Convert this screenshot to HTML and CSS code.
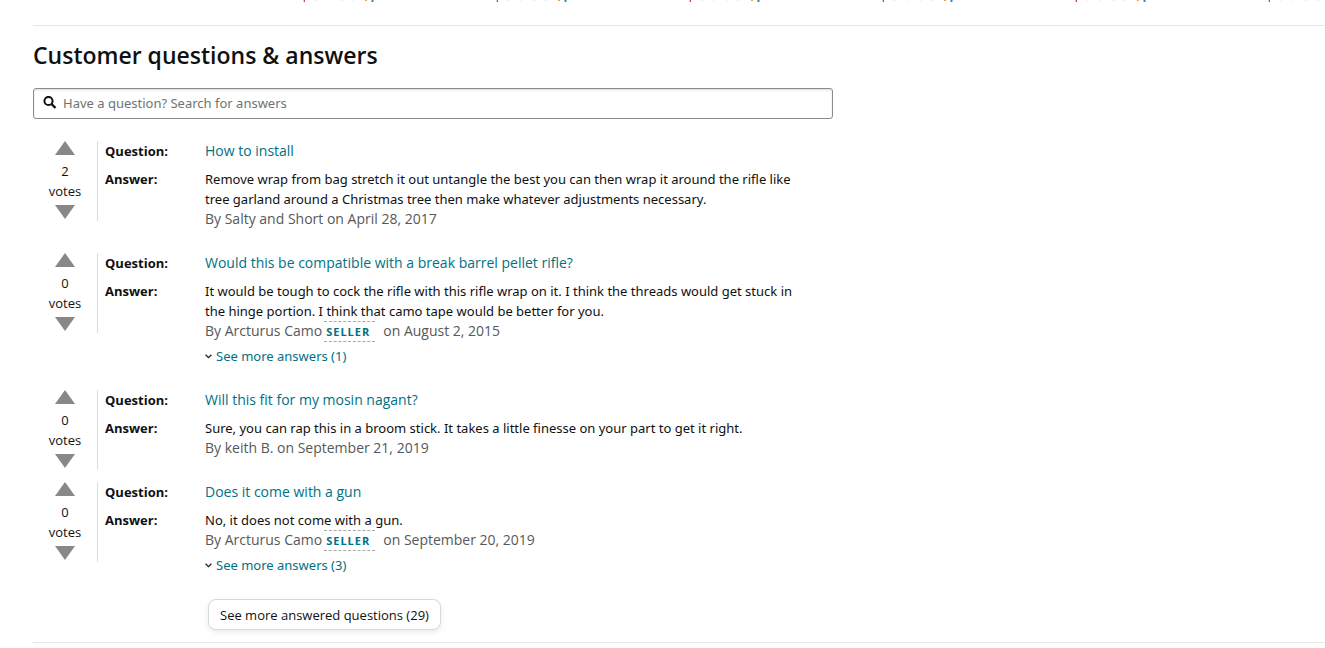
FILE: index.html
```
<!DOCTYPE html>
<html lang="en">
<head>
<meta charset="utf-8">
<meta name="viewport" content="width=device-width, initial-scale=1">
<title>Customer questions &amp; answers</title>
<link rel="stylesheet" href="styles.css">
</head>
<body>
<svg width="0" height="0" class="defs" aria-hidden="true">
  <symbol id="card-edge" viewBox="0 0 80 3">
    <path fill="#b5476b" d="M1 0h1v2h-1z"/>
    <path fill="#f3cdb5" d="M0 0h1v2H0z"/>
    <path fill="#f0f0f0" d="M11 0h3v1h-3zM24 0h2v1h-2zM37 0h3v1h-3zM48 0h3v1h-3z"/>
    <path fill="#e5a45c" d="M62 0h2v1h-2z"/>
    <path fill="#2f86ab" d="M69 0h1v2h-1z"/>
    <path fill="#8fd0e6" d="M68 0h1v2h-1zM70 0h1v2h-1z"/>
  </symbol>
</svg>
<main class="page">
  <div class="carousel-edge" aria-hidden="true">
    <svg class="edge"><use href="#card-edge"/></svg>
    <svg class="edge"><use href="#card-edge"/></svg>
    <svg class="edge"><use href="#card-edge"/></svg>
    <svg class="edge"><use href="#card-edge"/></svg>
    <svg class="edge"><use href="#card-edge"/></svg>
    <svg class="edge"><use href="#card-edge"/></svg>
  </div>
  <section class="qa">
    <h2 class="title">Customer questions &amp; answers</h2>
    <label class="search">
      <svg class="search-icon" viewBox="0 0 14 14" aria-hidden="true"><circle cx="5.5" cy="5" r="4.1" fill="none" stroke="#111" stroke-width="2"/><path d="M8.5 8l4 4" stroke="#111" stroke-width="2.4"/></svg>
      <input class="search-input" type="text" placeholder="Have a question? Search for answers" aria-label="Have a question? Search for answers">
    </label>
    <div class="list">
      <article class="item">
        <div class="votes">
          <button class="vote" aria-label="Vote up"><svg class="tri" viewBox="0 0 20 14"><path d="M10 0l10 14H0z"/></svg></button>
          <span class="count">2</span><span class="count">votes</span>
          <button class="vote vote-down" aria-label="Vote down"><svg class="tri" viewBox="0 0 20 14"><path d="M0 0h20L10 14z"/></svg></button>
        </div>
        <div class="body">
          <b class="label">Question:</b><div><a class="link" href="#">How to install</a></div>
          <b class="label">Answer:</b>
          <div>
            <p class="text">Remove wrap from bag stretch it out untangle the best you can then wrap it around the rifle like<br>tree garland around a Christmas tree then make whatever adjustments necessary.</p>
            <p class="byline">By Salty and Short on April 28, 2017</p>
          </div>
        </div>
      </article>
      <article class="item">
        <div class="votes">
          <button class="vote" aria-label="Vote up"><svg class="tri" viewBox="0 0 20 14"><path d="M10 0l10 14H0z"/></svg></button>
          <span class="count">0</span><span class="count">votes</span>
          <button class="vote vote-down" aria-label="Vote down"><svg class="tri" viewBox="0 0 20 14"><path d="M0 0h20L10 14z"/></svg></button>
        </div>
        <div class="body">
          <b class="label">Question:</b><div><a class="link" href="#">Would this be compatible with a break barrel pellet rifle?</a></div>
          <b class="label">Answer:</b>
          <div>
            <p class="text">It would be tough to cock the rifle with this rifle wrap on it. I think the threads would get stuck in<br>the hinge portion. I think that camo tape would be better for you.</p>
            <p class="byline"><span>By Arcturus Camo</span><a class="badge" href="#">SELLER</a><span>on August 2, 2015</span></p>
            <a class="link more" href="#"><svg class="chev" viewBox="0 0 7 5"><path d="M.6.8l2.9 2.9L6.4.8"/></svg>See more answers (1)</a>
          </div>
        </div>
      </article>
      <article class="item">
        <div class="votes">
          <button class="vote" aria-label="Vote up"><svg class="tri" viewBox="0 0 20 14"><path d="M10 0l10 14H0z"/></svg></button>
          <span class="count">0</span><span class="count">votes</span>
          <button class="vote vote-down" aria-label="Vote down"><svg class="tri" viewBox="0 0 20 14"><path d="M0 0h20L10 14z"/></svg></button>
        </div>
        <div class="body">
          <b class="label">Question:</b><div><a class="link" href="#">Will this fit for my mosin nagant?</a></div>
          <b class="label">Answer:</b>
          <div>
            <p class="text">Sure, you can rap this in a broom stick. It takes a little finesse on your part to get it right.</p>
            <p class="byline">By keith B. on September 21, 2019</p>
          </div>
        </div>
      </article>
      <article class="item">
        <div class="votes">
          <button class="vote" aria-label="Vote up"><svg class="tri" viewBox="0 0 20 14"><path d="M10 0l10 14H0z"/></svg></button>
          <span class="count">0</span><span class="count">votes</span>
          <button class="vote vote-down" aria-label="Vote down"><svg class="tri" viewBox="0 0 20 14"><path d="M0 0h20L10 14z"/></svg></button>
        </div>
        <div class="body">
          <b class="label">Question:</b><div><a class="link" href="#">Does it come with a gun</a></div>
          <b class="label">Answer:</b>
          <div>
            <p class="text">No, it does not come with a gun.</p>
            <p class="byline"><span>By Arcturus Camo</span><a class="badge" href="#">SELLER</a><span>on September 20, 2019</span></p>
            <a class="link more" href="#"><svg class="chev" viewBox="0 0 7 5"><path d="M.6.8l2.9 2.9L6.4.8"/></svg>See more answers (3)</a>
          </div>
        </div>
      </article>
    </div>
    <button class="see-all">See more answered questions (29)</button>
  </section>
</main>
</body>
</html>
```
FILE: styles.css
```
* { box-sizing: border-box; }
body {
  margin: 0;
  background: #fff;
  color: #0f1111;
  font: 14px/20px "Open Sans", "Noto Sans", sans-serif;
}
.defs { position: absolute; }
.page { padding-left: 33px; }
.carousel-edge {
  display: flex;
  gap: 113px;
  height: 25px;
  padding-left: 270px;
  overflow: hidden;
}
.edge { flex: none; width: 80px; height: 3px; }
.qa {
  border-top: 1px solid #e7e7e7;
  border-bottom: 1px solid #e7e7e7;
  padding: 13px 0 12px;
}
.title { margin: 0 0 17px; font-size: 23px; line-height: 32px; font-weight: 600; }
.search {
  display: flex;
  align-items: center;
  gap: 6px;
  max-width: 800px;
  height: 31px;
  padding: 0 9px 1px;
  border: 1px solid #888c8c;
  border-radius: 3px;
  box-shadow: 0 1px 2px rgba(15, 17, 17, .15) inset;
}
.search-icon { flex: none; width: 14px; height: 14px; }
.search-input {
  flex: 1;
  min-width: 0;
  padding: 0;
  border: 0;
  outline: 0;
  background: none;
  color: inherit;
  font: 13px/20px "Noto Sans", sans-serif;
}
.search-input::placeholder { color: #6f7373; opacity: 1; }
.list { display: grid; gap: 12px; margin-top: 22px; max-width: 800px; }
.item { display: flex; align-items: flex-start; }
.votes {
  display: flex;
  flex-direction: column;
  align-items: center;
  flex: none;
  width: 65px;
  height: 80px;
  border-right: 1px solid #ddd;
  font-size: 13px;
}
.vote {
  display: flex;
  height: 20px;
  padding: 0;
  border: 0;
  background: none;
  cursor: pointer;
}
.vote-down { padding-top: 4px; }
.tri { width: 20px; height: 14px; fill: #888; }
.body {
  display: grid;
  grid-template-columns: 100px 1fr;
  row-gap: 8px;
  flex: 1;
  min-width: 0;
  padding: 0 0 12px 7px;
}
.label { font-size: 13px; font-weight: 700; }
.text { margin: 0; font-family: "Noto Sans", sans-serif; font-size: 13px; }
.link { color: #007185; text-decoration: none; }
.byline { display: flex; height: 20px; margin: 0; color: #565959; }
.badge {
  margin: 0 8px 0 2px;
  padding: 0 5px 0 2px;
  height: 21px;
  border: dashed #aaa;
  border-width: 1px 0;
  color: #007185;
  font-size: 11px;
  font-weight: 700;
  letter-spacing: 1px;
  text-decoration: none;
}
.more {
  display: flex;
  align-items: center;
  gap: 4px;
  margin-top: 5px;
  font-family: "Noto Sans", sans-serif;
  font-size: 13px;
}
.chev { width: 7px; height: 5px; fill: none; stroke: #222; stroke-width: 1.3; }
.see-all {
  display: block;
  margin: 12px 0 0 175px;
  padding: 0 11px;
  height: 31px;
  border: 1px solid #d5d9d9;
  border-radius: 8px;
  background: #fff;
  color: #0f1111;
  font: inherit;
  font-size: 13px;
  box-shadow: 0 2px 5px rgba(213, 217, 217, .5);
}
```
